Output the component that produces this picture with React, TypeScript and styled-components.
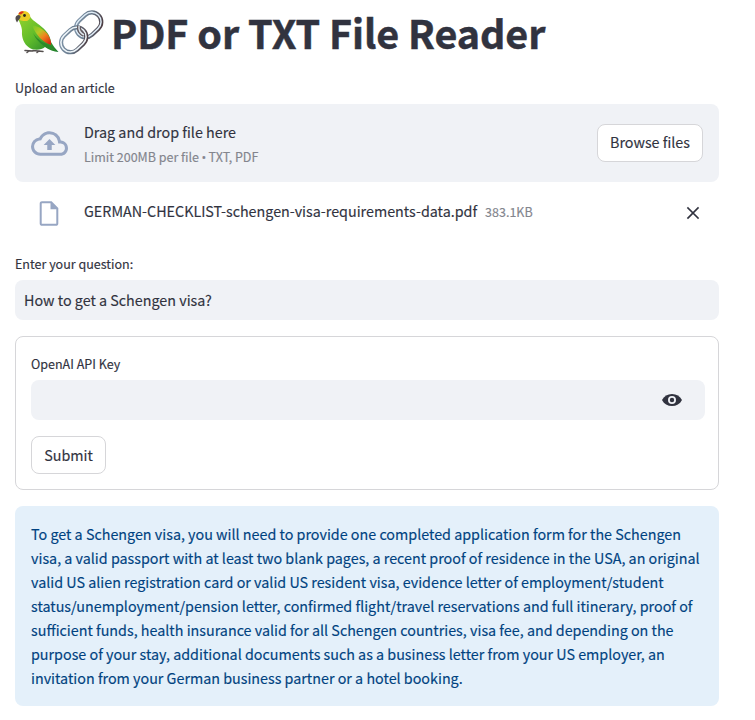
import React from "react";
import styled, { createGlobalStyle } from "styled-components";

const GlobalStyle = createGlobalStyle`
  * { box-sizing: border-box; }
  body {
    margin: 0;
    background: #fff;
    color: #31333f;
    font: 400 14.32px/24px "Source Sans Pro", "Noto Sans CJK SC", sans-serif;
    -webkit-text-stroke: 0.15px currentColor;
  }
`;

const Page = styled.main`
  width: 755px;
  height: 720px;
  padding: 0 36px 0 15px;
  overflow: hidden;
`;

const Title = styled.h1`
  display: flex;
  align-items: flex-start;
  margin: 0;
  height: 68px;
  font-size: 39.45px;
  line-height: 64px;
  font-weight: 700;
  letter-spacing: -0.05px;
  white-space: nowrap;
  -webkit-text-stroke: 0.5px currentColor;
`;

const Emoji = styled.svg`
  display: block;
  flex: none;
  width: 96px;
  height: 68px;
`;

const Label = styled.label`
  display: block;
  height: 20px;
  margin-bottom: 6px;
  font-size: 12.53px;
  line-height: 20px;
`;

const UploadLabel = styled(Label)`
  margin-top: 10px;
`;

const Dropzone = styled.section`
  display: flex;
  align-items: center;
  height: 78px;
  padding: 0 16px;
  border-radius: 8px;
  background: #f0f2f6;
`;

const CloudIcon = styled.svg`
  width: 37px;
  height: 37px;
  margin-right: 16px;
  fill: #97a6c3;
`;

const DropText = styled.div`
  flex: 1;
  padding-top: 3px;
`;

const Small = styled.span<{ $block?: boolean }>`
  display: ${(p) => (p.$block ? "block" : "inline")};
  margin-top: ${(p) => (p.$block ? "1px" : "0")};
  font-size: 12.5px;
  color: #83858d;
`;

const Bullet = styled.span`
  margin: 0 -0.4px;
  font-family: "Open Sans", sans-serif;
  line-height: 1;
`;

const Button = styled.button<{ $width: number; $lift?: number }>`
  width: ${(p) => p.$width}px;
  height: 38px;
  padding: 0 0 ${(p) => p.$lift ?? 1}px;
  border: 1px solid #d6d6d9;
  border-radius: 8px;
  background: #fff;
  color: inherit;
  font: inherit;
`;

const FileRow = styled.div`
  display: flex;
  align-items: center;
  height: 62px;
  padding: 0 19px 0 24px;
  margin-bottom: 10px;
`;

const FileIcon = styled.svg`
  width: 20px;
  height: 25px;
  margin-right: 25px;
`;

const FileName = styled.span`
  margin-right: 8px;
  padding-bottom: 4px;
`;

const FileSize = styled(Small)`
  padding-bottom: 2px;
`;

const CloseIcon = styled.svg`
  width: 14px;
  height: 14px;
  margin-left: auto;
`;

const Field = styled.div`
  display: flex;
  align-items: center;
  justify-content: space-between;
  height: 40px;
  padding: 0 22px 0 9px;
  border-radius: 8px;
  background: #f0f2f6;
`;

const EyeIcon = styled.svg`
  width: 22px;
  height: 14px;
  margin-left: auto;
`;

const Form = styled.form`
  height: 154px;
  margin: 16px 0;
  padding: 17px 13px 15px 15px;
  border: 1px solid #d6d6d9;
  border-radius: 8px;
`;

const SubmitRow = styled.div`
  margin-top: 16px;
`;

const Answer = styled.div`
  height: 200px;
  padding: 16px;
  border-radius: 8px;
  background: #e4f0fa;
  color: #004280;
  white-space: nowrap;
`;

const answerLines = [
  "To get a Schengen visa, you will need to provide one completed application form for the Schengen",
  "visa, a valid passport with at least two blank pages, a recent proof of residence in the USA, an original",
  "valid US alien registration card or valid US resident visa, evidence letter of employment/student",
  "status/unemployment/pension letter, confirmed flight/travel reservations and full itinerary, proof of",
  "sufficient funds, health insurance valid for all Schengen countries, visa fee, and depending on the",
  "purpose of your stay, additional documents such as a business letter from your US employer, an",
  "invitation from your German business partner or a hotel booking.",
];

const AnswerLine = styled.div`
  height: 24px;
`;

function ParrotAndLink() {
  return (
    <Emoji viewBox="0 0 96 68" aria-label="Parrot and link">
      <defs>
        <linearGradient id="body" x1="0" y1="0" x2="1" y2="1">
          <stop offset="0" stopColor="#9bd52c" />
          <stop offset=".5" stopColor="#5fbb2b" />
          <stop offset="1" stopColor="#16772d" />
        </linearGradient>
        <linearGradient id="wing" x1="0" y1="0" x2=".8" y2="1">
          <stop offset="0" stopColor="#6cc62b" />
          <stop offset=".4" stopColor="#b6c825" />
          <stop offset=".65" stopColor="#f0821c" />
          <stop offset="1" stopColor="#d52e12" />
        </linearGradient>
        <linearGradient id="steel" x1="0" y1="0" x2="1" y2="1">
          <stop offset="0" stopColor="#8398ad" />
          <stop offset=".5" stopColor="#66788a" />
          <stop offset="1" stopColor="#493438" />
        </linearGradient>
      </defs>
      <path d="M10 50.500l8 .5M18 50.500l10 1M14 51l-2 1.500M24 51l-2 1.500" stroke="#55504f" strokeWidth="1.500" strokeLinecap="round" />
      <path d="M3 18C3 11 12 10 14.500 15C15.500 19 20 21.500 24.500 25C31 30 35 35 36 42C38 46 41 49 43.500 52C39 51.500 34 50 30 47C26 50.500 18 50.500 14 47.500C9 44 6.500 38 7 31C7 26 4 22 3 18Z" fill="url(#body)" />
      <path d="M17 25C27 27 34 33 36 42L36 45C28 42 21 36 17 25Z" fill="url(#wing)" />
      <path d="M18 33C23 41 30 43 36 46L42 51C33 50 23 44 18 33Z" fill="#2c8a2a" />
      <path d="M3 17C2.500 10 12.500 9 15 15C16 19 13 21.500 9.500 21C6 21 3.500 20 3 17Z" fill="#e9cc25" />
      <path d="M3.500 14C4 11.500 7.500 10.500 9 12L6 14.500Z" fill="#df351d" />
      <path d="M4 15C0 15 -.5 19 2 22.500C3.500 20 6 18 5.500 16Z" fill="#514c4d" />
      <circle cx="9.500" cy="15.500" r="1.400" fill="#252820" />
      <g fill="none">
        <g transform="rotate(-43 73.500 25)">
          <rect x="60" y="15.500" width="27.500" height="19" rx="9.500" stroke="url(#steel)" strokeWidth="4.200" />
          <rect x="60" y="15.200" width="27.500" height="19" rx="9.500" stroke="#e0edf7" strokeWidth="1.500" />
        </g>
        <g transform="rotate(-43 58.500 40)">
          <rect x="45" y="30.500" width="27.500" height="19" rx="9.500" stroke="url(#steel)" strokeWidth="4.200" />
          <rect x="45" y="30.200" width="27.500" height="19" rx="9.500" stroke="#edf4f8" strokeWidth="1.600" />
        </g>
        <path d="M64 26C63.500 30 65 33 69 35" stroke="#665c61" strokeWidth="4" />
        <path d="M64 26C63.500 30 65 33 69 35" stroke="#dce6ed" strokeWidth="1.400" />
      </g>
    </Emoji>
  );
}

export default function App() {
  return (
    <>
      <GlobalStyle />
      <Page>
        <Title><ParrotAndLink />PDF or TXT File Reader</Title>
        <UploadLabel>Upload an article</UploadLabel>
        <Dropzone>
          <CloudIcon viewBox="0 0 24 24">
            <path d="M19.350 10.040A7.490 7.490 0 0 0 12 4C9.110 4 6.600 5.640 5.350 8.040A5.994 5.994 0 0 0 0 14c0 3.310 2.690 6 6 6h13c2.760 0 5-2.240 5-5 0-2.640-2.050-4.780-4.650-4.960zM19 18H6c-2.210 0-4-1.790-4-4 0-2.050 1.530-3.760 3.560-3.970l1.070-.110.500-.950A5.469 5.469 0 0 1 12 6c2.620 0 4.880 1.860 5.390 4.430l.300 1.500 1.530.110A2.980 2.980 0 0 1 22 15c0 1.650-1.350 3-3 3zM8.200 13h2.350v3.200h2.900V13h2.350L12 9.100z" />
          </CloudIcon>
          <DropText>
            <div>Drag and drop file here</div>
            <Small $block>Limit 200MB per file <Bullet>•</Bullet> TXT, PDF</Small>
          </DropText>
          <Button $width={106} $lift={2}>Browse files</Button>
        </Dropzone>
        <FileRow>
          <FileIcon viewBox="0 0 20 25">
            <path d="M2.500 1.200H12.200L18.300 7.400V22.500A1.300 1.300 0 0 1 17 23.800H3A1.300 1.300 0 0 1 1.700 22.500V2.500A1.300 1.300 0 0 1 3 1.200Z" fill="none" stroke="#97a6c3" strokeWidth="2" />
            <path d="M11.500 1V8.300H18.800Z" fill="#97a6c3" />
          </FileIcon>
          <FileName>GERMAN-CHECKLIST-schengen-visa-requirements-data.pdf</FileName>
          <FileSize>383.1KB</FileSize>
          <CloseIcon viewBox="0 0 14 14">
            <path d="M2 2l10 10M12 2L2 12" stroke="#31333f" strokeWidth="1.700" strokeLinecap="square" />
          </CloseIcon>
        </FileRow>
        <Label>Enter your question:</Label>
        <Field>How to get a Schengen visa?</Field>
        <Form onSubmit={(e: React.FormEvent) => e.preventDefault()}>
          <Label>OpenAI API Key</Label>
          <Field>
            <EyeIcon viewBox="0 0 22 14">
              <path d="M1 7C3 3 6.700 1 11 1S19 3 21 7C19 11 15.300 13 11 13S3 11 1 7Z" fill="#31333f" />
              <circle cx="11" cy="7" r="3.100" fill="#31333f" stroke="#f0f2f6" strokeWidth="1.800" />
            </EyeIcon>
          </Field>
          <SubmitRow><Button $width={75}>Submit</Button></SubmitRow>
        </Form>
        <Answer>
          {answerLines.map((line) => <AnswerLine key={line}>{line}</AnswerLine>)}
        </Answer>
      </Page>
    </>
  );
}
